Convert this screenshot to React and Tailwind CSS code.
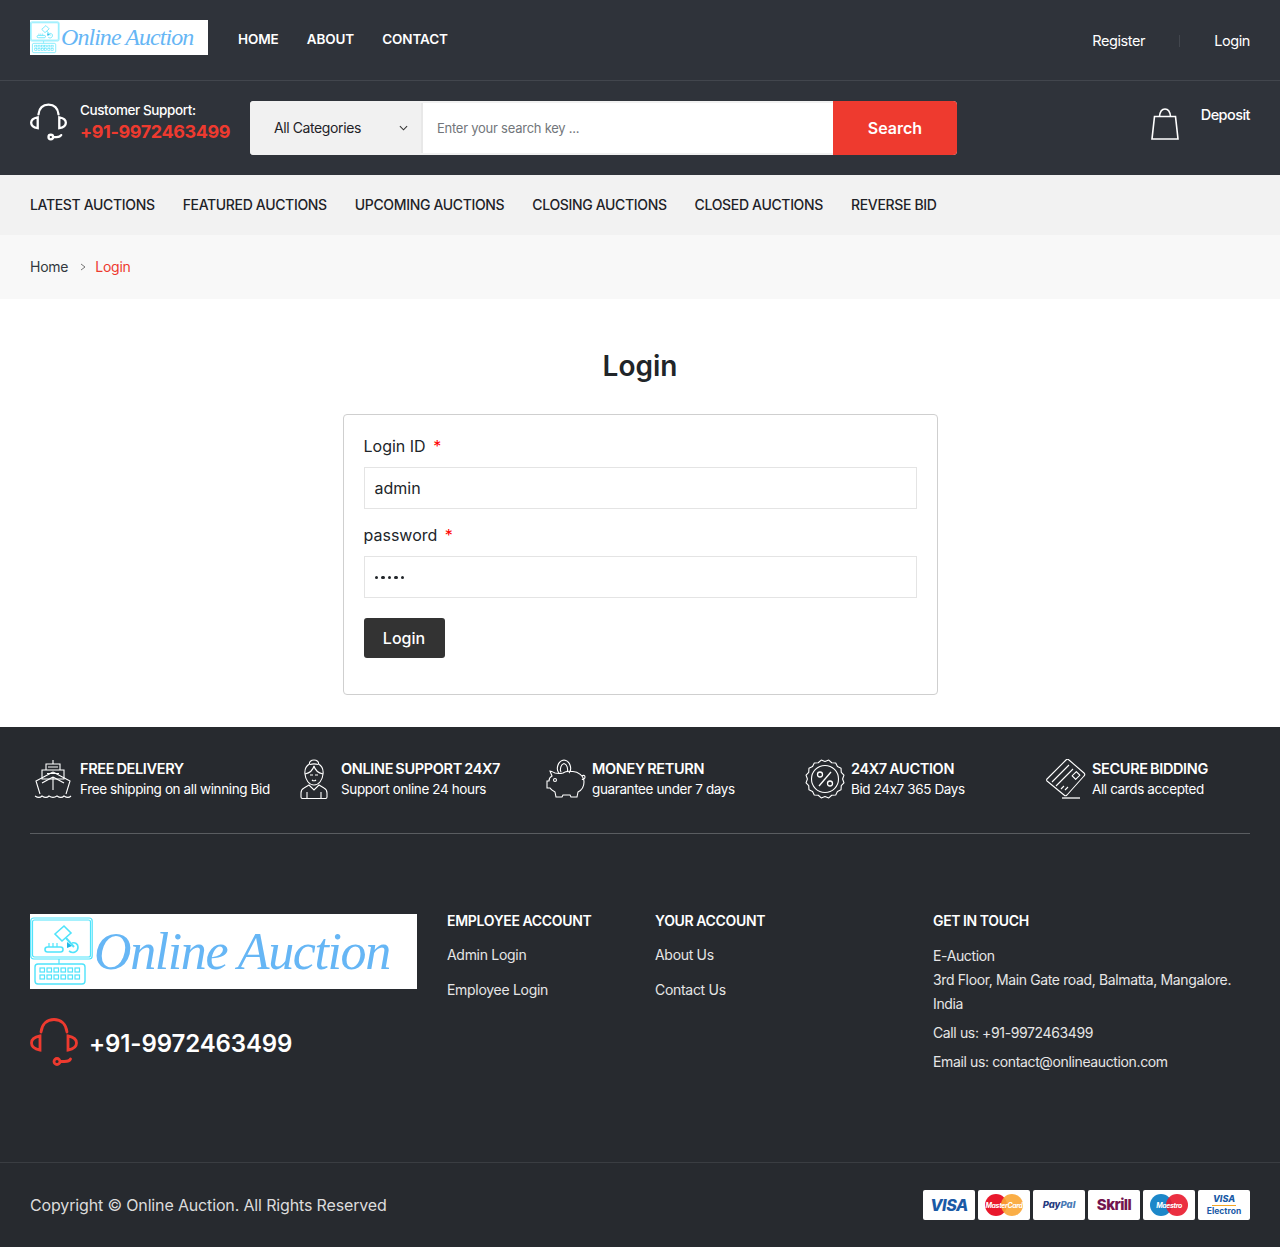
import React from "react";

const SANS = "font-['Inter','Roboto',sans-serif]";

function Logo({ small }) {
  if (small) {
    return (
      <div className="flex h-[35px] w-[178px] items-center bg-white">
        <LogoMark className="h-[35px] w-[30px] shrink-0" />
        <span className="ml-[1px] whitespace-nowrap text-[24px] leading-none tracking-[-0.95px] text-[#66b6f5] italic font-['Liberation_Serif',serif]">
          Online Auction
        </span>
      </div>
    );
  }
  return (
    <div className="flex h-[75px] w-[387px] items-center bg-white">
      <LogoMark className="h-[75px] w-[64px] shrink-0" />
      <span className="whitespace-nowrap text-[52px] leading-none tracking-[-1.4px] text-[#66b6f5] italic font-['Liberation_Serif',serif]">
        Online Auction
      </span>
    </div>
  );
}

function LogoMark({ className }) {
  return (
    <svg viewBox="0 0 64 75" className={className} fill="none" stroke="#4fe3fb" strokeWidth="1.2">
      <rect x="0.7" y="4" width="61.5" height="41" rx="3" />
      <rect x="2.5" y="6" width="58" height="37" rx="2" />
      <path d="M29 45v5" />
      <rect x="5" y="50" width="50" height="20" rx="3" strokeWidth="1.4" />
      {[10, 17, 24, 31, 38, 45].map((x) => (
        <g key={x}>
          <rect x={x} y="54" width="4.5" height="4" />
          <rect x={x} y="61" width="4.5" height="4" />
        </g>
      ))}
      <path d="M25 20l9-8 7 7-9 8z" strokeWidth="1.6" />
      <path d="M36 24l8 9" strokeWidth="2" />
      <rect x="15" y="33" width="18" height="5" rx="2.5" strokeWidth="1.6" />
      <path d="M19 33v-4M23 33v-4M27 33v-4" />
      <path d="M39 37c4 3 9 1 9-4 0-3-3-5-6-4" strokeWidth="1.6" />
      <path d="M37 28l5 4-5 2z" fill="#1fb6e8" stroke="none" />
    </svg>
  );
}

function Headset({ color, className, sw = 3 }) {
  return (
    <svg viewBox="0 0 48 48" className={className} fill="none" stroke={color} strokeWidth={sw} strokeLinecap="round">
      <path d="M11 14C12 6 17 1.500 24 1.500S36 6 37 14" />
      <path d="M10 18v14C4 31 1.500 28.500 1.500 25S4 19 10 18z" />
      <path d="M38 18v14c6-1 8.500-3.500 8.500-7S44 19 38 18z" />
      <circle cx="27" cy="43.500" r="3" />
      <path d="M30.500 43.500h4c3 0 5-.5 6-2.500" />
    </svg>
  );
}

function Ship() {
  return (
    <svg viewBox="0 0 38 40" className="h-[40px] w-[38px]" fill="none" stroke="#fff" strokeWidth="1.100">
      <path d="M19 1v4M12 5h14v6H12zM14 8h10M8 11h22v9H8zM13 14.500h12" />
      <path d="M19 13L2 22l4 13M19 13l17 9-4 13M19 18v13M19 18L8 24M19 18l11 6" />
      <path d="M1 37c3 2 5 2 7 0 3 2 5 2 7 0 3 2 5 2 8 0 3 2 5 2 7 0 3 2 5 2 7 0" />
    </svg>
  );
}
function Agent() {
  return (
    <svg viewBox="0 0 28 40" className="h-[40px] w-[28px]" fill="none" stroke="#fff" strokeWidth="1.100">
      <path d="M14 1c-3 0-5 2-4.500 4C6 7 4.500 11 5 15c.5 6 4 11 9 11s8.500-5 9-11c.5-4-1-8-4.500-10C19 3 17 1 14 1z" />
      <path d="M5 15c4-1 8-4 9-8 1 4 5 7 9 8M10 5.500c3-1 5-1 8 0" />
      <path d="M10 16h3M15 16h3M12 21c1 1 3 1 4 0" />
      <path d="M9 26l-5 3c-2 1-3 3-3 5v4c0 1 .5 1.500 1.500 1.500h23c1 0 1.500-.5 1.500-1.500v-4c0-2-1-4-3-5l-5-3-5 5z" />
      <path d="M7 39v-6M21 39v-6" />
    </svg>
  );
}
function Piggy() {
  return (
    <svg viewBox="0 0 40 40" className="h-[40px] w-[40px]" fill="none" stroke="#fff" strokeWidth="1.100">
      <path d="M13 14C10 11 11 2 18 1c7 1 8 10 5 13" />
      <path d="M15 13c-1.500-3 0-8 3-8.500 3 .5 4.500 5.500 3 8.500" />
      <path d="M9 14c-2-1-4-2-5-2l2 5c-2 1-3 3-3 5H1v7h3c1 2 3 3 5 4l1 5h6l1-2h7l1 2h6l1-5c4-2 6-6 6-10 0-6-6-11-12-10.500-3-.5-7 0-9 1.500-2 .5-3 .5-4 .5z" />
      <circle cx="9" cy="21" r="1.500" />
      <path d="M36 20c1 1 3 0 3-2s-2-2-3-1" />
    </svg>
  );
}
function Badge() {
  const pts = [];
  for (let i = 0; i < 32; i++) {
    const r = i % 2 ? 19.3 : 17.6;
    const a = (i / 32) * Math.PI * 2;
    pts.push(`${(20 + r * Math.cos(a)).toFixed(2)},${(20 + r * Math.sin(a)).toFixed(2)}`);
  }
  return (
    <svg viewBox="0 0 40 40" className="h-[40px] w-[40px]" fill="none" stroke="#fff" strokeWidth="1.100">
      <polygon points={pts.join(" ")} strokeLinejoin="round" />
      <circle cx="20" cy="20" r="13.500" />
      <path d="M26 13L14 27" strokeWidth="1.300" />
      <circle cx="15" cy="15.500" r="2.500" strokeWidth="1.300" />
      <circle cx="25" cy="24.500" r="2.500" strokeWidth="1.300" />
    </svg>
  );
}
function CardIcon() {
  return (
    <svg viewBox="0 0 40 40" className="h-[40px] w-[40px]" fill="none" stroke="#fff" strokeWidth="1.100" strokeLinejoin="round">
      <path d="M1 20L20 1c1-1 2-1 3 0l15 13c1 1 1 2 0 3L21 36c-1 1-2 1-3 0L1 22c-.5-.5-.5-1.500 0-2z" />
      <path d="M6 23L23 6M10 27L27 10M15 30l3-3M19 31l3-3" />
      <rect x="27" y="14" width="6" height="5" transform="rotate(-45 30 16.500)" />
      <path d="M16 39h18" strokeWidth="1.300" />
    </svg>
  );
}

function BagIcon() {
  return (
    <svg viewBox="0 0 28 32" className="h-[32px] w-[28px]" fill="none" stroke="#fff" strokeWidth="1.600">
      <path d="M3.500 8.500h21L27 31H1z" />
      <path d="M8.500 8.500C9 3 11 1 14 1s5 2 5.500 7.500" />
    </svg>
  );
}

function Feature({ icon, title, sub, className, iconBox }) {
  return (
    <div className={`flex items-center ${className}`}>
      <div className={`box-border flex shrink-0 items-center ${iconBox}`}>{icon}</div>
      <div className="whitespace-nowrap">
        <div className="pt-[1px] text-[14.500px] leading-[20px] font-semibold tracking-[-0.35px] [word-spacing:-1px] text-white">{title}</div>
        <div className="text-[13.500px] leading-[21px] tracking-[-0.38px] text-white">{sub}</div>
      </div>
    </div>
  );
}

function Pay({ children }) {
  return <div className="flex h-[30px] w-[52px] items-center justify-center overflow-hidden rounded-[2px] bg-white">{children}</div>;
}

function Circles({ a, b, label }) {
  return (
    <div className="relative flex h-[24px] w-[44px] items-center justify-center">
      <svg viewBox="0 0 44 24" className="h-[24px] w-[44px]">
        <circle cx="14" cy="12" r="11" fill={a} />
        <circle cx="30" cy="12" r="11" fill={b} fillOpacity="0.9" />
      </svg>
      <span className="absolute text-[7px] leading-none font-bold tracking-[-0.4px] text-white italic">{label}</span>
    </div>
  );
}

const fLink = "text-[14px] leading-[21px] tracking-[-0.3px] text-[#e6e6e6]";
const fHead = "text-[14px] leading-[14px] font-semibold tracking-[-0.3px] [word-spacing:-0.5px] text-white";

export default function App() {
  return (
    <div className={`w-full bg-white ${SANS}`}>
      <header className="bg-[#2f333a]">
        <div className="flex h-[81px] items-center justify-between border-b border-[#42464d] px-[30px]">
          <div className="flex items-center pb-[2px]">
            <div className="mb-[4px]"><Logo small /></div>
            <nav className="ml-[30px] flex gap-[28px] text-[13.500px] font-semibold tracking-[-0.1px] text-white">
              <span>HOME</span>
              <span>ABOUT</span>
              <span>CONTACT</span>
            </nav>
          </div>
          <div className="flex items-center pt-[2px] text-[14.500px] tracking-[-0.4px] text-white">
            <span>Register</span>
            <span className="mx-[34px] h-[12px] w-px bg-[#42464d]" />
            <span>Login</span>
          </div>
        </div>
        <div className="flex h-[94px] items-center justify-between px-[30px]">
          <div className="flex items-center">
            <div className="mb-[12px] flex items-center">
              <Headset color="#fff" className="h-[38px] w-[37px]" />
              <div className="ml-[13px] w-[170px]">
                <div className="text-[13.500px] leading-[20px] font-medium tracking-[-0.4px] text-white">Customer Support:</div>
                <div className="text-[18px] leading-[24px] font-bold tracking-[-0.4px] whitespace-nowrap text-[#ee3a2f]">+91-9972463499</div>
              </div>
            </div>
            <div className="flex h-[54px] w-[707px] overflow-hidden rounded-[4px] bg-[#f1f1f1]">
              <div className="flex w-[171px] items-center justify-between border-y-2 border-l-2 border-[#f1f1f1] pr-[13px] pb-[2px] pl-[22px] text-[14px] tracking-[-0.4px] text-[#1e2227]">
                <span>All Categories</span>
                <svg viewBox="0 0 10 6" className="mt-[2px] h-[6px] w-[9px]" fill="none" stroke="#333" strokeWidth="1.200"><path d="M1 1l4 4 4-4" /></svg>
              </div>
              <div className="my-[2px] flex flex-1 items-center border-l-2 border-[#e8e8e8] bg-white pt-[1px] pl-[14px] text-[13px] tracking-[-0.25px] text-[#72767b]">
                Enter your search key ...
              </div>
              <div className="flex w-[124px] items-center justify-center bg-[#ee3a2f] pb-[1px] text-[16px] font-semibold text-white">Search</div>
            </div>
          </div>
          <div className="mb-[8px] flex items-start">
            <BagIcon />
            <span className="-mt-[4px] ml-[22px] text-[14.500px] font-medium tracking-[-0.55px] text-white">Deposit</span>
          </div>
        </div>
      </header>

      <nav className="flex h-[60px] items-center gap-[28px] bg-[#f2f2f2] px-[30px] pb-[2px] text-[14px] font-medium tracking-[-0.34px] whitespace-nowrap text-[#1e2227]">
        <span>LATEST AUCTIONS</span>
        <span>FEATURED AUCTIONS</span>
        <span>UPCOMING AUCTIONS</span>
        <span>CLOSING AUCTIONS</span>
        <span>CLOSED AUCTIONS</span>
        <span>REVERSE BID</span>
      </nav>

      <div className="flex h-[64px] items-center bg-[#f8f8f8] px-[30px] pb-[1px] text-[14px] tracking-[-0.25px]">
        <span className="text-[#33383e]">Home</span>
        <svg viewBox="0 0 6 8" className="mr-[9px] ml-[12px] h-[8px] w-[6px]" fill="none" stroke="#555" strokeWidth="0.800"><path d="M1 1l4 3-4 3" /></svg>
        <span className="text-[#ee3a2f]">Login</span>
      </div>

      <main className="flex h-[428px] flex-col items-center bg-white pt-[49px]">
        <h1 className="text-[28px] leading-[36px] font-semibold text-[#212529]">Login</h1>
        <div className="mt-[30px] h-[281px] w-[595px] rounded-[4px] border border-[#cfcfcf] px-[20px] pt-[19px]">
          <label className="block text-[16px] leading-[24px] text-[#212529]">
            Login ID <span className="ml-[3px] text-[#ff0000]">*</span>
          </label>
          <div className="mt-[9px] flex h-[42px] items-center border border-[#e4e4e4] px-[10px] text-[16px] text-[#212529]">admin</div>
          <label className="mt-[14px] block text-[16px] leading-[24px] text-[#212529]">
            password <span className="ml-[3px] text-[#ff0000]">*</span>
          </label>
          <div className="mt-[9px] flex h-[42px] items-center gap-[3px] border border-[#e4e4e4] px-[10px]">
            {[0, 1, 2, 3, 4].map((i) => (
              <span key={i} className="h-[3px] w-[3.500px] rounded-full bg-[#212529]" />
            ))}
          </div>
          <div className="mt-[20px] flex h-[40px] w-[81px] items-center justify-center rounded-[3px] bg-[#333333] pb-[1px] text-[16px] font-medium text-white">Login</div>
        </div>
      </main>

      <footer className="bg-[#272a2f]">
        <div className="px-[30px]">
          <div className="flex h-[107px] items-center border-b border-[#5a5d61] pb-[2px]">
            <Feature className="w-[261px]" iconBox="w-[50px] pl-[4px]" icon={<Ship />} title="FREE DELIVERY" sub="Free shipping on all winning Bid" />
            <Feature className="w-[251px]" iconBox="w-[50px] pl-[9px]" icon={<Agent />} title="ONLINE SUPPORT 24X7" sub="Support online 24 hours" />
            <Feature className="w-[259px]" iconBox="w-[50px] pl-[4px]" icon={<Piggy />} title="MONEY RETURN" sub="guarantee under 7 days" />
            <Feature className="w-[241px]" iconBox="w-[50px] pl-[4px]" icon={<Badge />} title="24X7 AUCTION" sub="Bid 24x7 365 Days" />
            <Feature iconBox="w-[50px] pl-[4px]" icon={<CardIcon />} title="SECURE BIDDING" sub="All cards accepted" />
          </div>
          <div className="flex h-[328px] pt-[80px]">
            <div className="w-[417px]">
              <Logo />
              <div className="mt-[29px] flex items-center">
                <Headset color="#ee3a2f" className="h-[48px] w-[48px]" sw="2.800" />
                <span className="ml-[11px] pt-[3px] text-[24px] font-semibold tracking-[-0.1px] text-white">+91-9972463499</span>
              </div>
            </div>
            <div className="w-[208px]">
              <h3 className={fHead}>EMPLOYEE ACCOUNT</h3>
              <div className={`mt-[16px] ${fLink}`}>Admin Login</div>
              <div className={`mt-[14px] ${fLink}`}>Employee Login</div>
            </div>
            <div className="w-[278px]">
              <h3 className={fHead}>YOUR ACCOUNT</h3>
              <div className={`mt-[16px] ${fLink}`}>About Us</div>
              <div className={`mt-[14px] ${fLink}`}>Contact Us</div>
            </div>
            <div className="flex-1">
              <h3 className={fHead}>GET IN TOUCH</h3>
              <div className="mt-[16px] text-[14px] leading-[24px] tracking-[-0.37px] text-[#e6e6e6]">
                <div>E-Auction</div>
                <div className="whitespace-nowrap">3rd Floor, Main Gate road, Balmatta, Mangalore.</div>
                <div>India</div>
                <div className="mt-[5px]">Call us: +91-9972463499</div>
                <div className="mt-[5px]">Email us: contact@onlineauction.com</div>
              </div>
            </div>
          </div>
        </div>
        <div className="flex h-[85px] items-center justify-between border-t border-[#3a3d42] px-[30px]">
          <span className="text-[16px] tracking-[-0.15px] text-[#dcdcdc]">Copyright © Online Auction. All Rights Reserved</span>
          <div className="flex gap-[3px]">
            <Pay><span className="text-[16px] font-extrabold tracking-[-0.5px] text-[#1a5aa6] italic">VISA</span></Pay>
            <Pay><Circles a="#e9182c" b="#f9a533" label="MasterCard" /></Pay>
            <Pay><span className="text-[9.500px] font-extrabold text-[#253b80] italic">Pay<span className="text-[#4a7ab5]">Pal</span></span></Pay>
            <Pay><span className="text-[15px] font-extrabold tracking-[-0.6px] text-[#73144e]">Skrill</span></Pay>
            <Pay><Circles a="#1c87c9" b="#e9182c" label="Maestro" /></Pay>
            <Pay>
              <div className="flex flex-col items-center">
                <span className="text-[9px] leading-[10px] font-extrabold text-[#1a5aa6] italic">VISA</span>
                <span className="mt-[1px] h-[1px] w-[24px] bg-[#f5a623]" />
                <span className="text-[8.500px] leading-[10px] font-bold text-[#1a5aa6]">Electron</span>
              </div>
            </Pay>
          </div>
        </div>
      </footer>
    </div>
  );
}
